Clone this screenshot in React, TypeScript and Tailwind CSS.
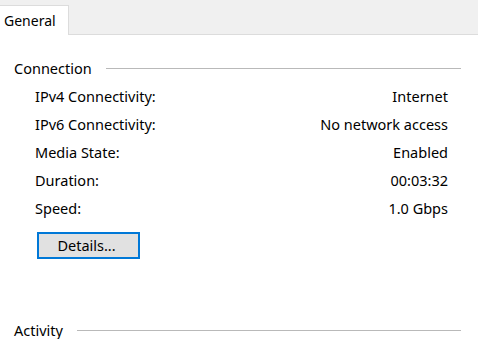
import React from 'react';

const rows: [string, string][] = [
  ['IPv4 Connectivity:', 'Internet'],
  ['IPv6 Connectivity:', 'No network access'],
  ['Media State:', 'Enabled'],
  ['Duration:', '00:03:32'],
  ['Speed:', '1.0 Gbps'],
];

function GroupLabel({ text }: { text: string }) {
  return (
    <div className="flex h-[28px] items-center gap-[14px] pl-[14px] pr-[17px]">
      <span>{text}</span>
      <div className="h-px flex-1 bg-[#b9b9b9]" />
    </div>
  );
}

export default function App() {
  return (
    <div className="h-[339px] w-[478px] overflow-hidden bg-white font-['Noto_Sans',sans-serif] text-[14.5px] leading-none text-black">
      <div className="flex h-[35px] items-end border-b border-[#dcdcdc] bg-[#f0f0f0]">
        <div className="-mb-px flex h-[30px] w-[69px] items-center border-r border-t border-[#dcdcdc] bg-white pl-[4px] text-[14px]">
          General
        </div>
      </div>

      <div className="mt-[19px]">
        <GroupLabel text="Connection" />
        <div className="pl-[35px] pr-[30px]">
          {rows.map(([label, value]) => (
            <div key={label} className="flex h-[28px] items-center justify-between">
              <span>{label}</span>
              <span>{value}</span>
            </div>
          ))}
        </div>
        <div className="mt-[10px] pl-[37px]">
          <button className="h-[27px] w-[103px] border-2 border-[#0078d7] bg-[#e1e1e1] pr-[4px] text-center">
            Details...
          </button>
        </div>
        <div className="mt-[57px]">
          <GroupLabel text="Activity" />
        </div>
      </div>
    </div>
  );
}
